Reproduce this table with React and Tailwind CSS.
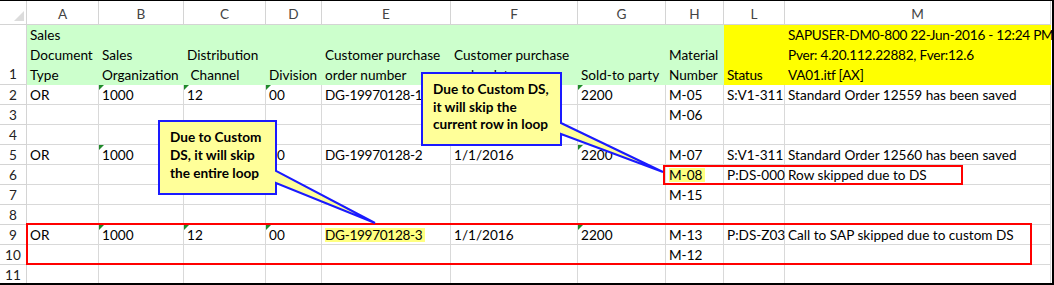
import React from 'react';

const FONT = { fontFamily: 'Lato, "Open Sans", Arial, sans-serif' };

const COL_LETTERS = ['A', 'B', 'C', 'D', 'E', 'F', 'G', 'H', 'L', 'M'];

// each data cell: string | {t, tri, hl}
const DATA = {
  2: { A: 'OR', B: { t: '1000', tri: true }, C: { t: '12', tri: true }, D: { t: '00', tri: true }, E: 'DG-19970128-1', F: '1/1/2016', G: { t: '2200', tri: true }, H: 'M-05', L: 'S:V1-311', M: 'Standard Order 12559 has been saved' },
  3: { H: 'M-06' },
  4: {},
  5: { A: 'OR', B: { t: '1000', tri: true }, C: { t: '12', tri: true }, D: { t: '00', tri: true }, E: 'DG-19970128-2', F: '1/1/2016', G: { t: '2200', tri: true }, H: 'M-07', L: 'S:V1-311', M: 'Standard Order 12560 has been saved' },
  6: { H: { t: 'M-08', hl: true }, L: 'P:DS-000', M: 'Row skipped due to DS' },
  7: { H: 'M-15' },
  8: {},
  9: { A: 'OR', B: { t: '1000', tri: true }, C: { t: '12', tri: true }, D: { t: '00', tri: true }, E: { t: 'DG-19970128-3', hl: true }, F: '1/1/2016', G: { t: '2200', tri: true }, H: 'M-13', L: 'P:DS-Z03', M: 'Call to SAP skipped due to custom DS' },
  10: { H: 'M-12' },
  11: {},
};

const HEADER = {
  A: ['Sales', 'Document', 'Type'],
  B: ['Sales', 'Organization'],
  C: ['Distribution', '\u00a0Channel'],
  D: ['Division'],
  E: ['Customer purchase', 'order number'],
  F: ['Customer purchase', 'order date'],
  G: ['Sold-to party'],
  H: ['Material', 'Number'],
  L: ['Status'],
  M: ['SAPUSER-DM0-800 22-Jun-2016 - 12:24 PM', 'Pver: 4.20.112.22882, Fver:12.6', 'VA01.itf [AX]'],
};

function Tri() {
  return (
    <svg className="absolute left-0 top-0" width="6" height="6" viewBox="0 0 6 6">
      <polygon points="0,0 5,0 0,5" fill="#1f8a2a" />
    </svg>
  );
}

function DataCell({ v, last, col }) {
  const cell = typeof v === 'string' ? { t: v } : v || {};
  const tight = col === 'E' ? 'tracking-[-0.3px]' : '';
  return (
    <div className={`relative whitespace-nowrap overflow-visible border-r border-[#d9d9d9] pl-[3px] text-[13.6px] leading-[20px] text-black ${tight} ${last ? '' : 'border-b'}`}>
      {cell.tri && <Tri />}
      {cell.hl ? (
        <span className="bg-[#ffff80] leading-[14px] inline-block pr-[3px]">{cell.t}</span>
      ) : (
        cell.t
      )}
    </div>
  );
}

export default function App() {
  const rows = [2, 3, 4, 5, 6, 7, 8, 9, 10, 11];
  return (
    <div className="relative w-[1054px] h-[285px] bg-white overflow-hidden" style={FONT}>
      <div className="h-full border-t border-r-2 border-b-2 border-black">
        <div className="grid grid-cols-[27px_72px_85px_82px_56px_129px_127px_88px_58px_61px_266px] grid-rows-[24px_60px_repeat(9,20px)_18px]">
          {/* column header row */}
          <div className="relative border-r border-b border-[#d4d4d4] bg-white">
            <svg className="absolute left-[14px] top-[10px]" width="10" height="10" viewBox="0 0 10 10">
              <polygon points="10,0 10,10 0,10" fill="#dcdcdc" />
            </svg>
          </div>
          {COL_LETTERS.map((c) => (
            <div key={c} className="border-r border-b border-[#d4d4d4] bg-white text-center text-[13.6px] leading-[22px] pt-[2px] text-[#444]">
              {c}
            </div>
          ))}

          {/* row 1 */}
          <div className="border-r border-b border-[#d4d4d4] flex items-end justify-center text-[13.6px] leading-[20px] text-[#222]">1</div>
          {COL_LETTERS.map((c) => (
            <div
              key={c}
              className={`flex flex-col justify-end whitespace-nowrap pl-[3px] text-[13.6px] leading-[20px] text-black ${c === 'L' || c === 'M' ? 'bg-[#ffff00] tracking-[-0.25px]' : 'bg-[#ccffcc]'}`}
            >
              {HEADER[c].map((line, i) => (
                <div key={i}>{line}</div>
              ))}
            </div>
          ))}

          {rows.map((r) => (
            <React.Fragment key={r}>
              <div className={`border-r border-[#d4d4d4] text-center text-[13.6px] leading-[20px] text-[#222] ${r === 11 ? '' : 'border-b'}`}>{r}</div>
              {COL_LETTERS.map((c) => (
                <DataCell key={c} col={c} v={DATA[r][c]} last={r === 11} />
              ))}
            </React.Fragment>
          ))}
        </div>
      </div>

      {/* red outline boxes */}
      <div className="absolute left-[663px] top-[165px] w-[300px] h-[20px] border-2 border-[#ff0000]" />
      <div className="absolute left-[26px] top-[223px] w-[1006px] h-[42px] border-2 border-[#ff0000]" />

      {/* callout shapes */}
      <svg className="absolute left-0 top-0" width="1054" height="285" viewBox="0 0 1054 285">
        <path d="M422,73 H561 V123 L663,172 L561,134 V145 H422 Z" fill="#ffff99" stroke="#1a1aff" strokeWidth="2" strokeLinejoin="miter" />
        <path d="M159,121 H276 V171 L375,223 L276,183 V194 H159 Z" fill="#ffff99" stroke="#1a1aff" strokeWidth="2" strokeLinejoin="miter" />
      </svg>

      {/* callout texts */}
      <div className="absolute left-[433px] top-[81px] text-[13.6px] leading-[17.5px] font-bold text-black whitespace-nowrap">
        <div>Due to Custom DS,</div>
        <div>it will skip the</div>
        <div>current row in loop</div>
      </div>
      <div className="absolute left-[170px] top-[128px] text-[13.6px] leading-[18px] font-bold text-black whitespace-nowrap">
        <div>Due to Custom</div>
        <div>DS, it will skip</div>
        <div>the entire loop</div>
      </div>
    </div>
  );
}
